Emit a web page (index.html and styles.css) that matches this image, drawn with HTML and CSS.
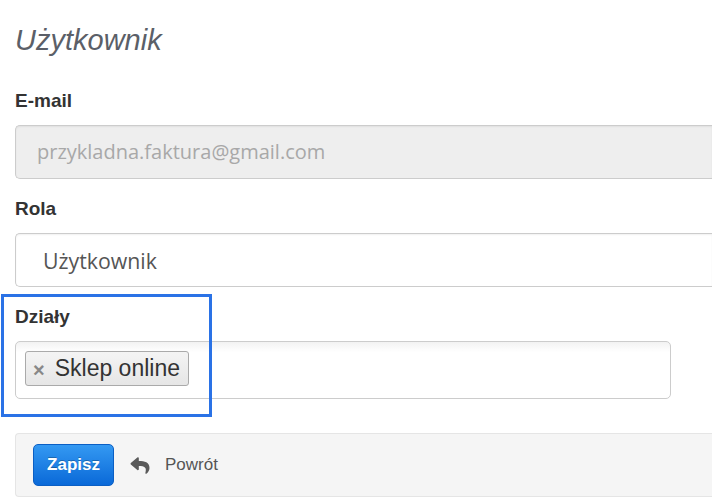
FILE: index.html
```html
<!DOCTYPE html>
<html lang="pl">
<head>
    <meta charset="UTF-8">
    <title>Użytkownik</title>
    <link rel="stylesheet" href="styles.css">
</head>
<body>
    <div class="page">
        <h1 class="title">Użytkownik</h1>
        <form class="form">
            <div class="group">
                <label class="label">E-mail</label>
                <div class="input input-disabled">przykladna.faktura@gmail.com</div>
            </div>
            <div class="group">
                <label class="label">Rola</label>
                <div class="input select">Użytkownik</div>
            </div>
            <div class="group group-tags">
                <label class="label">Działy</label>
                <div class="tags">
                    <span class="tag"><span class="tag-remove">&times;</span>Sklep online</span>
                </div>
            </div>
            <div class="actions">
                <button type="button" class="btn-save">Zapisz</button>
                <a class="back" href="#">
                    <svg class="back-icon" viewBox="0 0 512 512" width="20" height="19">
                        <path d="M8.3 189.8L184.3 37.9c15.4-13.3 39.7-2.5 39.7 18.2v80c160.6 1.8 288 34 288 186.3 0 61.4-39.6 122.3-83.3 154.1-13.7 9.9-33.1-2.5-28.1-18.6 45.3-145-21.5-183.5-176.6-185.7V360c0 20.7-24.3 31.5-39.7 18.2l-176-152c-11.1-9.6-11.1-26.8 0-36.4z"/>
                    </svg>
                    Powrót
                </a>
            </div>
        </form>
        <div class="highlight"></div>
    </div>
</body>
</html>
```

FILE: styles.css
```css
body {
    margin: 0;
    padding: 0;
    background: #fff;
    font-family: "Liberation Sans", Arial, sans-serif;
    color: #333;
    overflow: hidden;
}
.page {
    position: relative;
    padding: 23px 0 0 15px;
}
.title {
    margin: 0;
    font-size: 29px;
    line-height: 34px;
    font-style: italic;
    font-weight: normal;
    color: #5b5f68;
}
.form {
    margin-top: 33px;
}
.group {
    margin-bottom: 19px;
}
.group-tags {
    margin-bottom: 34px;
}
.label {
    display: block;
    font-size: 19px;
    line-height: 22px;
    font-weight: bold;
    color: #333;
    margin-bottom: 13px;
}
/* right edge is cut off by the window, so no right border */
.input {
    box-sizing: border-box;
    height: 54px;
    border: 1px solid #ccc;
    border-right: none;
    border-radius: 5px 0 0 5px;
    background: #fff;
    box-shadow: inset 0 1px 2px rgba(0, 0, 0, 0.06);
    display: flex;
    align-items: center;
    font-family: "Open Sans", "Liberation Sans", sans-serif;
}
.input-disabled {
    background: #eee;
    color: #a8a8a8;
    font-size: 20px;
    padding-left: 21px;
    padding-bottom: 1px;
}
.select {
    color: #555;
    font-size: 21.3px;
    padding-left: 27px;
}
.tags {
    box-sizing: border-box;
    width: 656px;
    height: 58px;
    border: 1px solid #ccc;
    border-radius: 5px;
    background: linear-gradient(#f2f2f2, #fff 18%);
    padding: 9px 9px;
}
.tag {
    box-sizing: border-box;
    display: inline-flex;
    align-items: center;
    height: 35px;
    padding: 0 8px 0 7px;
    border: 1px solid #aaa;
    border-radius: 3px;
    background: linear-gradient(#f4f4f4, #e6e6e6);
    font-size: 23px;
    color: #333;
}
.tag-remove {
    font-size: 20px;
    font-weight: bold;
    color: #888;
    margin-right: 10px;
    margin-top: 3px;
}
.actions {
    box-sizing: border-box;
    height: 64px;
    border: 1px solid #e5e5e5;
    border-right: none;
    border-radius: 4px 0 0 4px;
    background: #f5f5f5;
    padding: 10px 17px;
    display: flex;
    align-items: center;
}
.btn-save {
    width: 81px;
    height: 42px;
    border: 1px solid #0b5fc4;
    border-radius: 5px;
    background: linear-gradient(#3499f2, #0a69d8);
    color: #fff;
    font-family: "Liberation Sans", Arial, sans-serif;
    font-size: 17px;
    font-weight: bold;
    text-shadow: 0 -1px 0 rgba(0, 0, 0, 0.25);
    cursor: pointer;
}
.back {
    display: flex;
    align-items: center;
    margin-left: 16px;
    font-size: 17px;
    color: #555;
    text-decoration: none;
}
.back-icon {
    fill: #5a5a5a;
    margin-right: 15px;
}
.highlight {
    position: absolute;
    left: 1px;
    top: 294px;
    width: 205px;
    height: 117px;
    border: 3px solid #2a72e6;
}
```
